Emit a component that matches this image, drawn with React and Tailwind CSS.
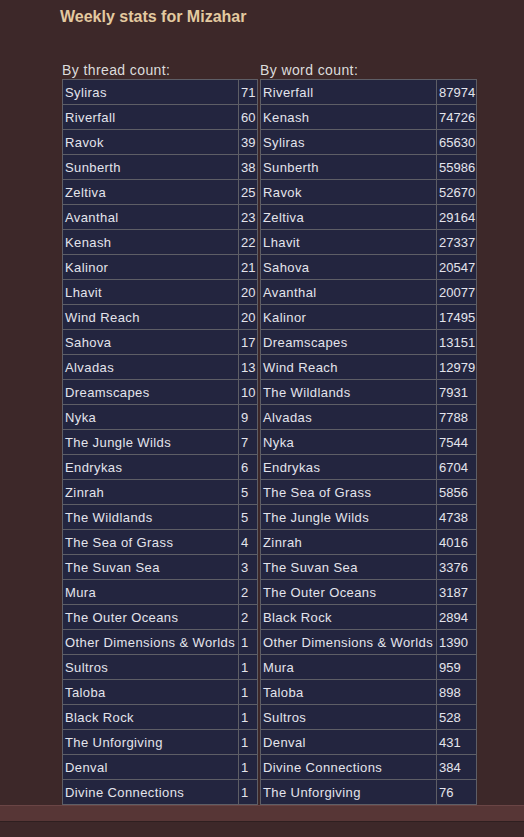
const threads = [
  ["Syliras", 71],
  ["Riverfall", 60],
  ["Ravok", 39],
  ["Sunberth", 38],
  ["Zeltiva", 25],
  ["Avanthal", 23],
  ["Kenash", 22],
  ["Kalinor", 21],
  ["Lhavit", 20],
  ["Wind Reach", 20],
  ["Sahova", 17],
  ["Alvadas", 13],
  ["Dreamscapes", 10],
  ["Nyka", 9],
  ["The Jungle Wilds", 7],
  ["Endrykas", 6],
  ["Zinrah", 5],
  ["The Wildlands", 5],
  ["The Sea of Grass", 4],
  ["The Suvan Sea", 3],
  ["Mura", 2],
  ["The Outer Oceans", 2],
  ["Other Dimensions & Worlds", 1],
  ["Sultros", 1],
  ["Taloba", 1],
  ["Black Rock", 1],
  ["The Unforgiving", 1],
  ["Denval", 1],
  ["Divine Connections", 1],
];

const words = [
  ["Riverfall", 87974],
  ["Kenash", 74726],
  ["Syliras", 65630],
  ["Sunberth", 55986],
  ["Ravok", 52670],
  ["Zeltiva", 29164],
  ["Lhavit", 27337],
  ["Sahova", 20547],
  ["Avanthal", 20077],
  ["Kalinor", 17495],
  ["Dreamscapes", 13151],
  ["Wind Reach", 12979],
  ["The Wildlands", 7931],
  ["Alvadas", 7788],
  ["Nyka", 7544],
  ["Endrykas", 6704],
  ["The Sea of Grass", 5856],
  ["The Jungle Wilds", 4738],
  ["Zinrah", 4016],
  ["The Suvan Sea", 3376],
  ["The Outer Oceans", 3187],
  ["Black Rock", 2894],
  ["Other Dimensions & Worlds", 1390],
  ["Mura", 959],
  ["Taloba", 898],
  ["Sultros", 528],
  ["Denval", 431],
  ["Divine Connections", 384],
  ["The Unforgiving", 76],
];

const StatTable = ({ label, rows, valueWidth }) => {
  return (
    <div className="flex flex-col">
      <div className="h-[17px] leading-[17px] text-[14px] tracking-[0.4px] text-[#dcdcdc]">
        {label}
      </div>
      <table className="border-collapse border border-[#5e5e66] bg-[#23253f]">
        <tbody>
          {rows.map(([name, count]) => (
            <tr key={name} className="h-[25px]">
              <td className="w-[176px] border border-[#5e5e66] px-[2px] pt-[1px] text-[13px] tracking-[0.4px] text-[#e4e4ec] whitespace-nowrap">
                {name}
              </td>
              <td
                className={`${valueWidth} border border-[#5e5e66] pl-[2px] pr-[1px] pt-[1px] text-[13px] text-[#e4e4ec]`}
              >
                {count}
              </td>
            </tr>
          ))}
        </tbody>
      </table>
    </div>
  );
};

const App = () => {
  return (
    <div
      className="min-h-[837px] bg-[#3d2829] flex flex-col"
      style={{ fontFamily: '"Liberation Sans", Arial, sans-serif' }}
    >
      <div className="px-[60px] pt-[7px]">
        <h1 className="text-[16px] font-bold text-[#e3caa0] leading-[20px]">
          Weekly stats for Mizahar
        </h1>
      </div>

      <div className="flex gap-[2px] pl-[62px] pt-[35px]">
        <StatTable label="By thread count:" rows={threads} valueWidth="w-[19px]" />
        <StatTable label="By word count:" rows={words} valueWidth="w-[40px]" />
      </div>

      <div className="h-[17px] bg-[#573636] border-t border-[#6a4545] border-b border-b-[#2f1f20]" />
      <div className="flex-1 bg-[#3d2829]" />
    </div>
  );
};

export default App;
